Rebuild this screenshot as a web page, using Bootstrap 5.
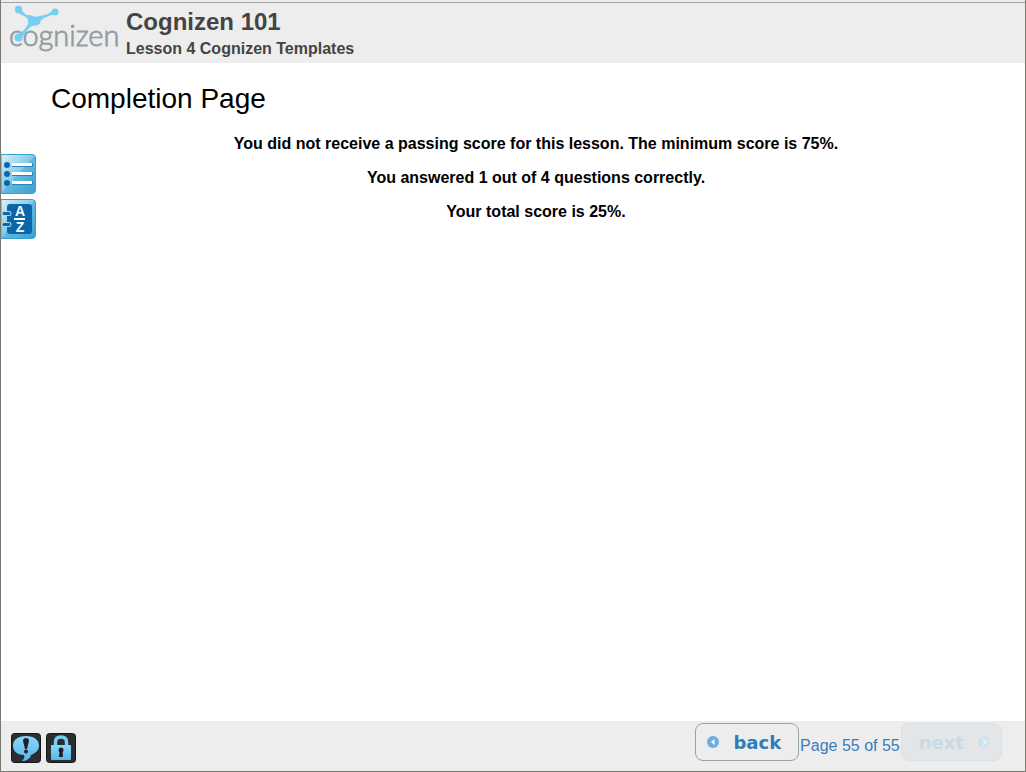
<!DOCTYPE html>
<html lang="en">
<head>
<meta charset="utf-8">
<meta name="viewport" content="width=device-width, initial-scale=1">
<title>Cognizen 101</title>
<link href="https://cdn.jsdelivr.net/npm/bootstrap@5.3.0/dist/css/bootstrap.min.css" rel="stylesheet">
<style>
body { font-family: "Liberation Sans", Arial, sans-serif; color: #000; }
.player { border: solid #7b7a70; border-width: 0 1px 1px; }
.masthead { background: #ededed; height: 63px; padding-left: 9px; }
.masthead::before { content: ""; position: absolute; inset: 2px 0 auto; height: 1px; background: #a4a4a4; }
.logo { margin-top: 4px; }
.course { color: #444; margin-left: 6px; padding-top: 8px; }
.course h1 { font-size: 24px; line-height: 28px; font-weight: 700; margin: 0; }
.course h2 { font-size: 16px; line-height: 26px; font-weight: 700; margin: 0; }
.tools { left: 0; top: 91px; gap: 5px; }
.lesson { padding: 17px 4px 0 50px; }
.lesson h3 { font-size: 28px; line-height: 38px; font-weight: 400; margin: 0 0 16px; }
.lesson p { font-size: 16px; line-height: 20px; font-weight: 700; margin: 0 0 14px; }
.plain { border: 0; background: none; padding: 0; display: block; }
.plain svg { display: block; }
.controls { background: #ededed; height: 50px; padding: 0 23px 0 10px; }
.extras { gap: 5px; padding-top: 12px; }
.pager { padding-top: 2px; }
.step { height: 38px; border: 1px solid #96a3a8; border-radius: 8px; font: 700 18px/38px "DejaVu Sans", Verdana, sans-serif; color: #2e7db9; background: #ededed; padding: 0 17px 0 11px; gap: 14px; }
.step span { padding-top: 1px; }
.step:disabled { color: #c8dae6; background: #e2e6e9; border-color: #dce1e4; padding: 0 11px 0 17px; opacity: 1; }
.count { color: #3a7bbd; font-size: 16px; line-height: 20px; padding: 13px 1px 0; }
</style>
</head>
<body>
<div class="player min-vh-100 d-flex flex-column">
  <header class="masthead d-flex align-items-start position-relative">
    <svg class="logo" width="110" height="58" viewBox="10 4 110 58" role="img" aria-label="Cognizen">
      <text x="9" y="46" font-family="Lato, sans-serif" font-size="29" font-weight="300" fill="#929da1" stroke="#929da1" stroke-width=".8">cognizen</text>
      <path d="M20 7Q25 17 30 15Q36 18 42 15.500Q48 15 54 9.500L57 14Q50 15 44 18Q40 20 40 24Q36 26 32 26Q28 28 21 39L17 36Q26 29 28 24Q29 20 26 17Q22 15 16 12Z" fill="#76cef3"/>
      <g fill="#76cef3"><circle cx="18.500" cy="9.500" r="3.700"/><circle cx="55" cy="12" r="3.500"/><circle cx="18.500" cy="37.500" r="4"/></g>
    </svg>
    <div class="course"><h1>Cognizen 101</h1><h2>Lesson 4 Cognizen Templates</h2></div>
  </header>
  <main class="lesson flex-grow-1 position-relative">
    <nav class="tools position-absolute d-flex flex-column" aria-label="Lesson tools">
      <button class="plain" type="button" aria-label="Table of contents">
        <svg width="35" height="40" viewBox="1 154 35 40">
          <defs><linearGradient id="sky" x1="0" y1="0" x2="1" y2="1"><stop offset="0" stop-color="#ddf0f9"/><stop offset=".5" stop-color="#82c9e9"/><stop offset=".5" stop-color="#65b9df"/><stop offset="1" stop-color="#399fd1"/></linearGradient></defs>
          <path d="M1 154.500H32Q35.500 154.500 35.500 158V190Q35.500 193.500 32 193.500H1Z" fill="url(#sky)" stroke="#3a9fd1"/>
          <g fill="#0868ad"><circle cx="7" cy="165" r="3"/><circle cx="7" cy="174" r="3"/><circle cx="7" cy="183" r="3"/></g>
          <path d="M12 166.500H32.500V163M12 175.500H32.500V172M12 184.500H32.500V181" fill="none" stroke="#2b83b7"/>
          <path d="M12 163H32V166H12ZM12 172H32V175H12ZM12 181H32V184H12Z" fill="#fff"/>
        </svg>
      </button>
      <button class="plain" type="button" aria-label="Glossary">
        <svg width="35" height="40" viewBox="1 199 35 40">
          <path d="M1 199.500H32Q35.500 199.500 35.500 203V235Q35.500 238.500 32 238.500H1Z" fill="url(#sky)" stroke="#3a9fd1"/>
          <path d="M10 204H29Q32 204 32 207V231Q32 234 29 234H10Q7 234 7 231V207Q7 204 10 204Z" fill="#0967a9"/>
          <path d="M4 213.500H9M4 224.500H9" stroke="#a9dbf0" stroke-width="5" stroke-linecap="round"/>
          <path d="M4 213.500H9M4 224.500H9" stroke="#0967a9" stroke-width="3" stroke-linecap="round"/>
          <g fill="#fff" font-family="Liberation Sans, Arial, sans-serif" font-size="14" font-weight="700" text-anchor="middle"><text x="20" y="216">A</text><text x="20" y="232">Z</text></g>
          <path d="M14 218H25V220H14Z" fill="#fff"/>
        </svg>
      </button>
    </nav>
    <h3>Completion Page</h3>
    <div class="text-center">
      <p>You did not receive a passing score for this lesson. The minimum score is 75%.</p>
      <p>You answered 1 out of 4 questions correctly.</p>
      <p>Your total score is 25%.</p>
    </div>
  </main>
  <footer class="controls d-flex justify-content-between align-items-start">
    <div class="extras d-flex">
      <button class="plain" type="button" aria-label="Comments">
        <svg width="30" height="30" viewBox="11 733 30 30">
          <defs><linearGradient id="glow" x1="0" y1="0" x2="0" y2="1"><stop offset="0" stop-color="#8ad7fa"/><stop offset="1" stop-color="#58b7e8"/></linearGradient></defs>
          <rect x="11.500" y="733.500" width="29" height="29" rx="3" fill="#2b2e30" stroke="#151515"/>
          <path d="M26 736C34 736 39 740 39 745.500C39 750 36 753 31 755C30 759 26 761 22 761C24 759 25 757 24 755C17 755 13 751 13 745.500C13 740 18 736 26 736Z" fill="url(#glow)"/>
          <path d="M23 741Q23 738 26 738Q29 738 29 741L27 749H25Z" fill="#202326"/><circle cx="26" cy="751.500" r="2" fill="#202326"/>
        </svg>
      </button>
      <button class="plain" type="button" aria-label="Lock">
        <svg width="30" height="30" viewBox="46 733 30 30">
          <rect x="46.500" y="733.500" width="29" height="29" rx="3" fill="#2b2e30" stroke="#151515"/>
          <path d="M55.500 746V742Q55.500 737 61 737Q66.500 737 66.500 742V746" fill="none" stroke="#78cdf5" stroke-width="3.500"/>
          <rect x="51" y="745" width="20" height="15" rx="1" fill="url(#glow)"/>
          <circle cx="61" cy="750" r="2.500" fill="#202326"/><path d="M59.500 750H62.500L63 757H59Z" fill="#202326"/>
        </svg>
      </button>
    </div>
    <div class="pager d-flex align-items-start">
      <button class="step d-flex align-items-center" type="button">
        <svg width="12" height="12" viewBox="0 0 12 12"><circle cx="6" cy="6" r="6" fill="#6caee0"/><path d="M7.500 3V9L4 6Z" fill="#fff"/></svg>
        <span>back</span>
      </button>
      <span class="count">Page 55 of 55</span>
      <button class="step d-flex align-items-center" type="button" disabled>
        <span>next</span>
        <svg width="12" height="12" viewBox="0 0 12 12"><circle cx="6" cy="6" r="6" fill="#cfe2ee"/><path d="M5 3L8 6L5 9" fill="none" stroke="#edf3f6" stroke-width="1.500"/></svg>
      </button>
    </div>
  </footer>
</div>
<script src="https://cdn.jsdelivr.net/npm/bootstrap@5.3.0/dist/js/bootstrap.bundle.min.js"></script>
</body>
</html>
